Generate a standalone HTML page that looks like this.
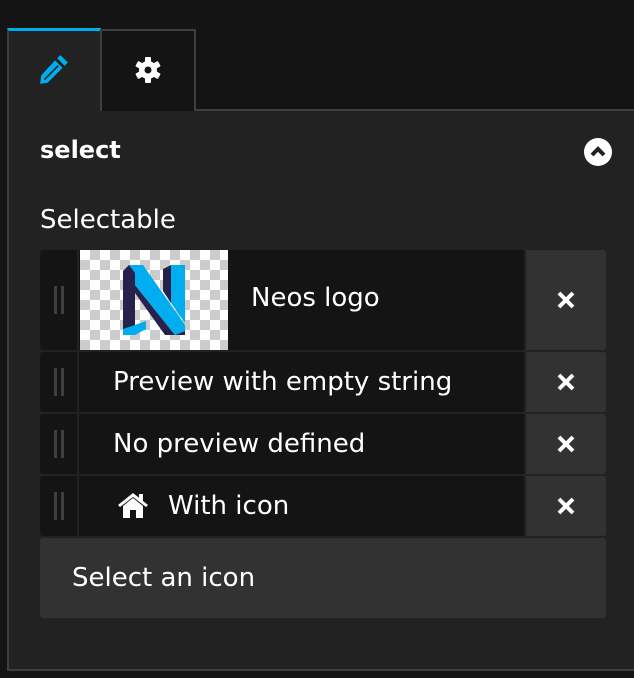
<!DOCTYPE html>
<html><head><style>
*{box-sizing:border-box;margin:0;padding:0}
body{width:634px;height:678px;background:#141414;position:relative;overflow:hidden;font-family:"DejaVu Sans","Liberation Sans",sans-serif;color:#fff}
.abs{position:absolute}
.panel{left:7px;top:110px;width:627px;height:560px;background:#222;border-left:2px solid #3f3f3f}
.line{left:195px;top:109px;width:439px;height:2px;background:#3f3f3f}
.bot{left:7px;top:669px;width:627px;height:2px;background:#3f3f3f}
.tab1{left:7px;top:28px;width:94px;height:84px;background:#222;border-left:2px solid #3f3f3f;border-top:3px solid #00adee}
.tab2{left:100px;top:29px;width:96px;height:82px;background:#141414;border:2px solid #3f3f3f;border-bottom:none}
.row{left:40px;width:484px;background:#141414;border-radius:3px 0 0 3px}
.drag{position:absolute;left:0;top:0;bottom:0;width:39px;border-right:2px solid #222}
.drag i{position:absolute;top:50%;margin-top:-14px;width:3px;height:28px;background:#3f3f3f}
.del{left:526px;width:80px;background:#323232;border-radius:0 3px 3px 0}
.del svg{position:absolute;left:50%;top:50%;margin:-10px 0 0 -10px}
.t{position:absolute;font-size:26px;white-space:nowrap}
</style></head><body>
<div class="abs panel"></div>
<div class="abs line"></div>
<div class="abs bot"></div>
<div class="abs tab1"></div>
<div class="abs tab2"></div>
<svg class="abs" style="left:38px;top:54px" width="32" height="32" viewBox="0 0 30 30"><path d="M21 1 L28 8 L25 11 L18 4Z M16 6 L23 13 L9 27 L2 28 L3 20Z" fill="#00adee"/><path d="M6 24 L19 11" stroke="#222" stroke-width="1.5"/></svg>
<svg class="abs" style="left:134px;top:56px" width="28" height="28" viewBox="0 0 28 28"><g fill="#fff"><circle cx="14" cy="14" r="9"/><rect x="11" y="1" width="6" height="26" rx="1"/><rect x="11" y="1" width="6" height="26" rx="1" transform="rotate(60 14 14)"/><rect x="11" y="1" width="6" height="26" rx="1" transform="rotate(120 14 14)"/></g><circle cx="14" cy="14" r="3.5" fill="#141414"/></svg>
<div class="t" style="left:40px;top:136px;font-weight:bold;font-size:24px">select</div>
<svg class="abs" style="left:584px;top:138px" width="28" height="28"><circle cx="14" cy="14" r="14" fill="#fff"/><path d="M8 17 L14 11 L20 17" stroke="#222" stroke-width="4" fill="none"/></svg>
<div class="t" style="left:40px;top:205px">Selectable</div>

<div class="abs row" style="top:250px;height:100px"><div class="drag"><i style="left:14px"></i><i style="left:21px"></i></div></div>
<div class="abs" style="left:80px;top:250px;width:148px;height:100px;background-color:#fff;background-image:linear-gradient(45deg,#ccc 25%,transparent 25%,transparent 75%,#ccc 75%),linear-gradient(45deg,#ccc 25%,transparent 25%,transparent 75%,#ccc 75%);background-size:20px 20px;background-position:0 0,10px 10px"></div>
<svg class="abs" style="left:123px;top:265px" width="62" height="70" viewBox="0 0 62 70">
<path d="M0 6 L6 0 L12 0 L12 70 L0 70Z" fill="#26224c"/>
<path d="M0 70 L0 64 L12 60 L23 56 L23 64 L12 70Z" fill="#00adee"/>
<path d="M12 20 L12 28 L42 70 L52 70Z" fill="#26224c"/>
<path d="M6 0 L20 0 L62 60 L62 66 L52 70 L12 20 L12 8Z" fill="#00adee"/>
<path d="M48 0 L62 0 L62 58 L48 38Z" fill="#00adee"/>
<path d="M40 4 L48 0 L48 38 L40 26Z" fill="#26224c"/>
<path d="M52 70 L62 66 L62 70Z" fill="#26224c"/>
</svg>
<div class="t" style="left:251px;top:283px">Neos logo</div>
<div class="abs del" style="top:250px;height:100px"><svg width="20" height="20"><path d="M3 3L17 17M17 3L3 17" stroke="#fff" stroke-width="4"/></svg></div>

<div class="abs row" style="top:352px;height:60px"><div class="drag"><i style="left:14px"></i><i style="left:21px"></i></div></div>
<div class="t" style="left:113px;top:367px">Preview with empty string</div>
<div class="abs del" style="top:352px;height:60px"><svg width="20" height="20"><path d="M3 3L17 17M17 3L3 17" stroke="#fff" stroke-width="4"/></svg></div>

<div class="abs row" style="top:414px;height:60px"><div class="drag"><i style="left:14px"></i><i style="left:21px"></i></div></div>
<div class="t" style="left:113px;top:429px">No preview defined</div>
<div class="abs del" style="top:414px;height:60px"><svg width="20" height="20"><path d="M3 3L17 17M17 3L3 17" stroke="#fff" stroke-width="4"/></svg></div>

<div class="abs row" style="top:476px;height:60px"><div class="drag"><i style="left:14px"></i><i style="left:21px"></i></div></div>
<svg class="abs" style="left:117px;top:493px" width="32" height="26" viewBox="0 0 32 26"><path d="M1 12 L16 0 L31 12 L29 14 L16 4 L3 14Z" fill="#fff"/><rect x="22" y="1" width="4" height="8" fill="#fff"/><path d="M6 13 L16 5 L26 13 L26 25 L19 25 L19 17 L13 17 L13 25 L6 25Z" fill="#fff"/></svg>
<div class="t" style="left:168px;top:491px">With icon</div>
<div class="abs del" style="top:476px;height:60px"><svg width="20" height="20"><path d="M3 3L17 17M17 3L3 17" stroke="#fff" stroke-width="4"/></svg></div>

<div class="abs" style="left:40px;top:538px;width:566px;height:80px;background:#323232;border-radius:3px"></div>
<div class="t" style="left:72px;top:563px">Select an icon</div>
</body></html>
